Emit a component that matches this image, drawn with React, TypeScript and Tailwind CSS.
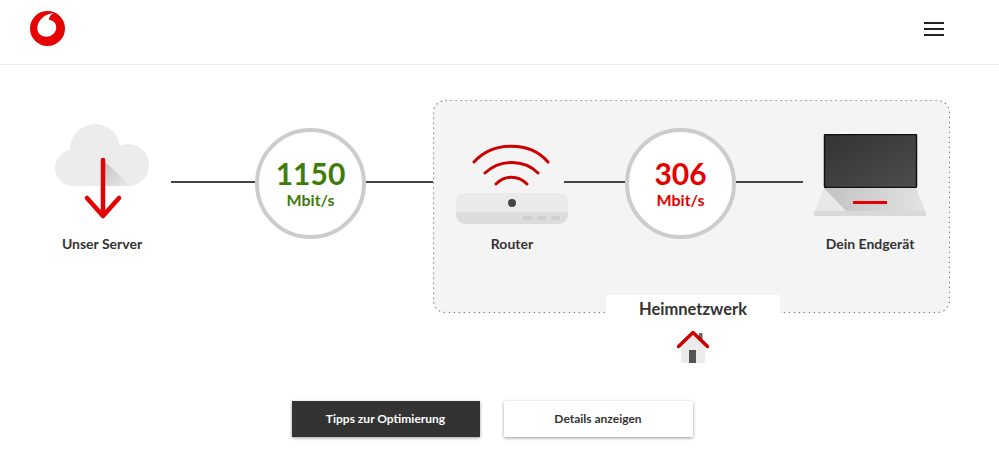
const Logo = () => (
  <svg width="35" height="35" viewBox="0 0 36 36" className="-mt-[2px] block">
    <circle cx="18" cy="18" r="18" fill="#e60000" />
    <path d="M24.5 2C16 2.5 7.5 9 7.5 18 7.5 23 12 26.5 17 26.5 22.5 26.5 27 22 27 17 27 12 23.5 9.5 19.5 9 19.5 6 21.5 3.5 24.5 2Z" fill="#fff" />
  </svg>
);

const Cloud = () => (
  <svg width="100" height="96" viewBox="0 0 100 96" className="mb-[14px] block">
    <defs>
      <linearGradient id="cl" x1="0" y1="0" x2="1" y2="1">
        <stop offset="0" stopColor="#bdbdbd" />
        <stop offset="1" stopColor="#ececec" />
      </linearGradient>
    </defs>
    <g fill="#ececec">
      <circle cx="43" cy="25" r="25" />
      <circle cx="76" cy="41" r="21" />
      <circle cx="21" cy="44" r="18" />
      <rect x="21" y="30" width="55" height="32" />
    </g>
    <path d="M51 36 78 61 76 62H51Z" fill="url(#cl)" />
    <path d="M51 36V92M35 74 51 92 67 74" stroke="#e60000" strokeWidth="4.5" fill="none" strokeLinecap="round" strokeLinejoin="round" />
  </svg>
);

const RouterIcon = () => (
  <svg width="112" height="84" viewBox="0 0 112 84" className="mb-[10px] block">
    <g stroke="#cc0000" fill="none" strokeWidth="3" strokeLinecap="round">
      <path d="M18 22C37 1 74 1 92 22" />
      <path d="M29 33C44 19 68 19 82 33" />
      <path d="M40 44C49 35 62 35 71 44" />
    </g>
    <path d="M0 63C0 56 3 53 9 53H103C109 53 112 56 112 63V74C112 80 108 84 102 84H10C4 84 0 80 0 74Z" fill="#eaeaea" />
    <path d="M0 72H112V74C112 80 108 84 102 84H10C4 84 0 80 0 74Z" fill="#dcdcdc" />
    <circle cx="56" cy="63" r="4" fill="#444" />
    <g fill="#cfcfcf">
      <rect x="67" y="76" width="9" height="4" />
      <rect x="81" y="76" width="9" height="4" />
      <rect x="95" y="76" width="9" height="4" />
    </g>
  </svg>
);

const Laptop = () => (
  <svg width="114" height="82" viewBox="0 0 114 82" className="mb-[18px] block">
    <defs>
      <linearGradient id="sc" x1="0" y1="0" x2="1" y2="1">
        <stop offset="0" stopColor="#333" />
        <stop offset="1" stopColor="#4d4d4d" />
      </linearGradient>
      <linearGradient id="kb" x1="0" y1="0" x2="1" y2="0">
        <stop offset="0" stopColor="#c2c2c2" />
        <stop offset="1" stopColor="#e2e2e2" />
      </linearGradient>
    </defs>
    <rect x="11.5" y="0.5" width="92" height="53" rx="1" fill="url(#sc)" stroke="#111" strokeWidth="1.5" />
    <path d="M11 54H103L112 77H2Z" fill="#e8e8e8" />
    <path d="M11 54H103L112 77H33Z" fill="url(#kb)" />
    <rect x="1" y="77" width="112" height="5" rx="1" fill="#d9d9d9" />
    <rect x="40" y="67" width="34" height="3" fill="#e60000" />
  </svg>
);

const House = () => (
  <svg width="34" height="34" viewBox="0 0 34 34" className="block">
    <path d="M5 15 17 4 29 15V31C29 32 28 33 27 33H7C6 33 5 32 5 31Z" fill="#ebebeb" />
    <rect x="23" y="3" width="3.5" height="8" fill="#666" />
    <rect x="13" y="20" width="7" height="13" fill="#555" />
    <path d="M2.5 16.5 17 2.5 31.5 16.5" stroke="#cc0000" strokeWidth="3.5" fill="none" strokeLinecap="round" strokeLinejoin="round" />
  </svg>
);

const Speed = ({ value, color }: { value: string; color: string }) => (
  <div className="mt-[4px] flex h-[111px] w-[111px] shrink-0 flex-col items-center justify-center rounded-full border-[4px] border-[#cccccc] bg-white">
    <span className={`text-[30px] font-bold leading-[30px] ${color}`}>{value}</span>
    <span className={`mt-[3px] text-[16px] font-bold leading-[18px] ${color}`}>Mbit/s</span>
  </div>
);

const Line = ({ className }: { className: string }) => (
  <div className={`mt-[57px] h-[2px] shrink-0 bg-[#444] ${className}`} />
);

const Label = ({ children }: { children: string }) => (
  <p className="whitespace-nowrap text-center text-[14px] font-bold leading-[20px] text-[#333]">{children}</p>
);

export default function App() {
  return (
    <div className="min-h-[455px] bg-white font-['Lato',sans-serif]">
      <header className="flex h-[65px] items-center justify-between border-b border-[#ebebeb] pb-[6px] pl-[30px] pr-[55px]">
        <Logo />
        <button className="flex w-[20px] flex-col gap-[4px]">
          <span className="h-[2px] bg-[#222]" />
          <span className="h-[2px] bg-[#222]" />
          <span className="h-[2px] bg-[#222]" />
        </button>
      </header>

      <main className="flex items-start pl-[52px] pt-[35px]">
        <div className="mt-[24px] flex items-start">
          <div className="w-[100px] shrink-0">
            <Cloud />
            <Label>Unser Server</Label>
          </div>
          <Line className="ml-[19px] w-[84px]" />
          <Speed value="1150" color="text-[#3f7d0b]" />
          <Line className="w-[67px]" />
        </div>

        <div className="w-[517px] shrink-0">
          <div className="relative flex h-[213px] items-start rounded-[12px] bg-[#f4f4f4] pl-[23px] pt-[24px]">
            <svg width="517" height="213" viewBox="0 0 517 213" className="absolute left-0 top-0">
              <rect x="0.5" y="0.5" width="516" height="212" rx="12" fill="none" stroke="#777" strokeWidth="1.2" strokeDasharray="1.2 3.8" />
            </svg>
            <div className="relative w-[112px] shrink-0 pt-[16px]">
              <RouterIcon />
              <Label>Router</Label>
            </div>
            <Line className="relative ml-[-4px] w-[61px]" />
            <div className="relative">
              <Speed value="306" color="text-[#e60000]" />
            </div>
            <Line className="relative w-[67px]" />
            <div className="relative ml-[10px] w-[114px] shrink-0 pt-[10px]">
              <Laptop />
              <Label>Dein Endgerät</Label>
            </div>
          </div>
          <div className="relative -mt-[18px] ml-[173px] flex w-[174px] flex-col items-center">
            <div className="h-[26px] w-full bg-white text-center text-[16.5px] font-bold leading-[28px] text-[#333]">Heimnetzwerk</div>
            <div className="mt-[9px]"><House /></div>
          </div>
        </div>
      </main>

      <div className="mt-[37px] flex justify-center gap-[24px] pr-[15px]">
        <button className="h-[36px] w-[188px] bg-[#333] text-[12px] font-bold text-white shadow-[0_1px_3px_rgba(0,0,0,0.4)]">Tipps zur Optimierung</button>
        <button className="h-[36px] w-[189px] bg-white text-[12px] font-bold text-[#333] shadow-[0_1px_3px_rgba(0,0,0,0.4)]">Details anzeigen</button>
      </div>
    </div>
  );
}
